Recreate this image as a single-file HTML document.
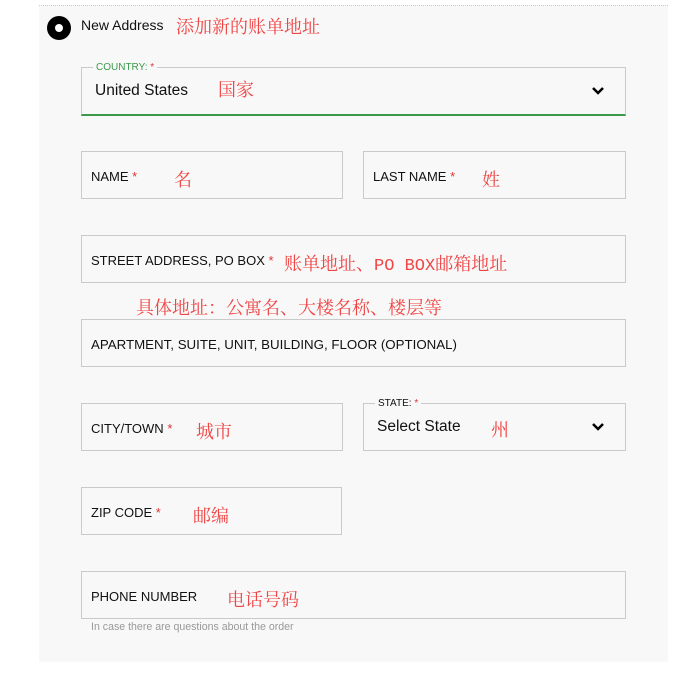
<!DOCTYPE html>
<html><head><meta charset="utf-8"><style>
body{margin:0;width:685px;height:673px;background:#fff;position:relative;overflow:hidden;font-family:"Liberation Sans","Noto Sans CJK SC",sans-serif;}
.panel{position:absolute;left:39px;top:5px;width:629px;height:656px;background:#f8f8f8;border-top:1px dotted #ccc;}
.box{position:absolute;border:1px solid #cacaca;box-sizing:border-box;}
.lab{position:absolute;font-size:13px;color:#111;letter-spacing:0;}
.lab b{color:#d33;font-weight:normal;}
.red{position:absolute;color:#f04545;font-family:"Noto Serif CJK SC","Noto Sans CJK SC",serif;font-size:18px;white-space:nowrap;}
.leg{position:absolute;font-size:10px;background:#f8f8f8;padding:0 3px;top:-6px;left:11px;line-height:11px;}
.chev{position:absolute;right:20px;top:18px;}
</style></head><body>
<div class="panel"></div>
<div style="position:absolute;left:47px;top:16px;width:24px;height:24px;border-radius:50%;background:#000;"></div>
<div style="position:absolute;left:55px;top:24px;width:8px;height:8px;border-radius:50%;background:#fff;"></div>
<div class="lab" style="left:81px;top:17px;font-size:14px;">New Address</div>
<div class="red" style="left:176px;top:13px;">添加新的账单地址</div>

<div class="box" style="left:81px;top:67px;width:545px;height:49px;border-bottom:2px solid #3a9a4a;">
<div class="leg" style="color:#3a9a4a;">COUNTRY: <span style="color:#d33">*</span></div>
<div class="lab" style="left:13px;top:14px;font-size:15.5px;">United States</div>
<svg class="chev" width="14" height="10" viewBox="0 0 14 10"><path d="M2 2l5 5 5-5" stroke="#000" stroke-width="2.5" fill="none"/></svg>
</div>
<div class="red" style="left:218px;top:76px;">国家</div>

<div class="box" style="left:81px;top:151px;width:262px;height:48px;"><div class="lab" style="left:9px;top:17px;">NAME <b>*</b></div></div>
<div class="red" style="left:174px;top:166px;">名</div>
<div class="box" style="left:363px;top:151px;width:263px;height:48px;"><div class="lab" style="left:9px;top:17px;">LAST NAME <b>*</b></div></div>
<div class="red" style="left:482px;top:166px;">姓</div>

<div class="box" style="left:81px;top:235px;width:545px;height:48px;"><div class="lab" style="left:9px;top:17px;">STREET ADDRESS, PO BOX <b>*</b></div></div>
<div class="red" style="left:284px;top:250px;">账单地址、<span style="font-family:'Liberation Mono',monospace;font-size:17px;">PO BOX</span>邮箱地址</div>
<div class="red" style="left:136px;top:294px;">具体地址：公寓名、大楼名称、楼层等</div>

<div class="box" style="left:81px;top:319px;width:545px;height:48px;"><div class="lab" style="left:9px;top:17px;font-size:13.3px;">APARTMENT, SUITE, UNIT, BUILDING, FLOOR (OPTIONAL)</div></div>

<div class="box" style="left:81px;top:403px;width:262px;height:48px;"><div class="lab" style="left:9px;top:17px;">CITY/TOWN <b>*</b></div></div>
<div class="red" style="left:196px;top:418px;">城市</div>
<div class="box" style="left:363px;top:403px;width:263px;height:48px;">
<div class="leg" style="color:#111;">STATE: <span style="color:#d33">*</span></div>
<div class="lab" style="left:13px;top:14px;font-size:15.5px;">Select State</div>
<svg class="chev" width="14" height="10" viewBox="0 0 14 10"><path d="M2 2l5 5 5-5" stroke="#000" stroke-width="2.5" fill="none"/></svg>
</div>
<div class="red" style="left:491px;top:416px;">州</div>

<div class="box" style="left:81px;top:487px;width:261px;height:48px;"><div class="lab" style="left:9px;top:17px;">ZIP CODE <b>*</b></div></div>
<div class="red" style="left:193px;top:502px;">邮编</div>

<div class="box" style="left:81px;top:571px;width:545px;height:48px;"><div class="lab" style="left:9px;top:17px;">PHONE NUMBER</div></div>
<div class="red" style="left:227px;top:586px;">电话号码</div>
<div style="position:absolute;left:91px;top:621px;font-size:10.6px;color:#999;">In case there are questions about the order</div>
</body></html>
